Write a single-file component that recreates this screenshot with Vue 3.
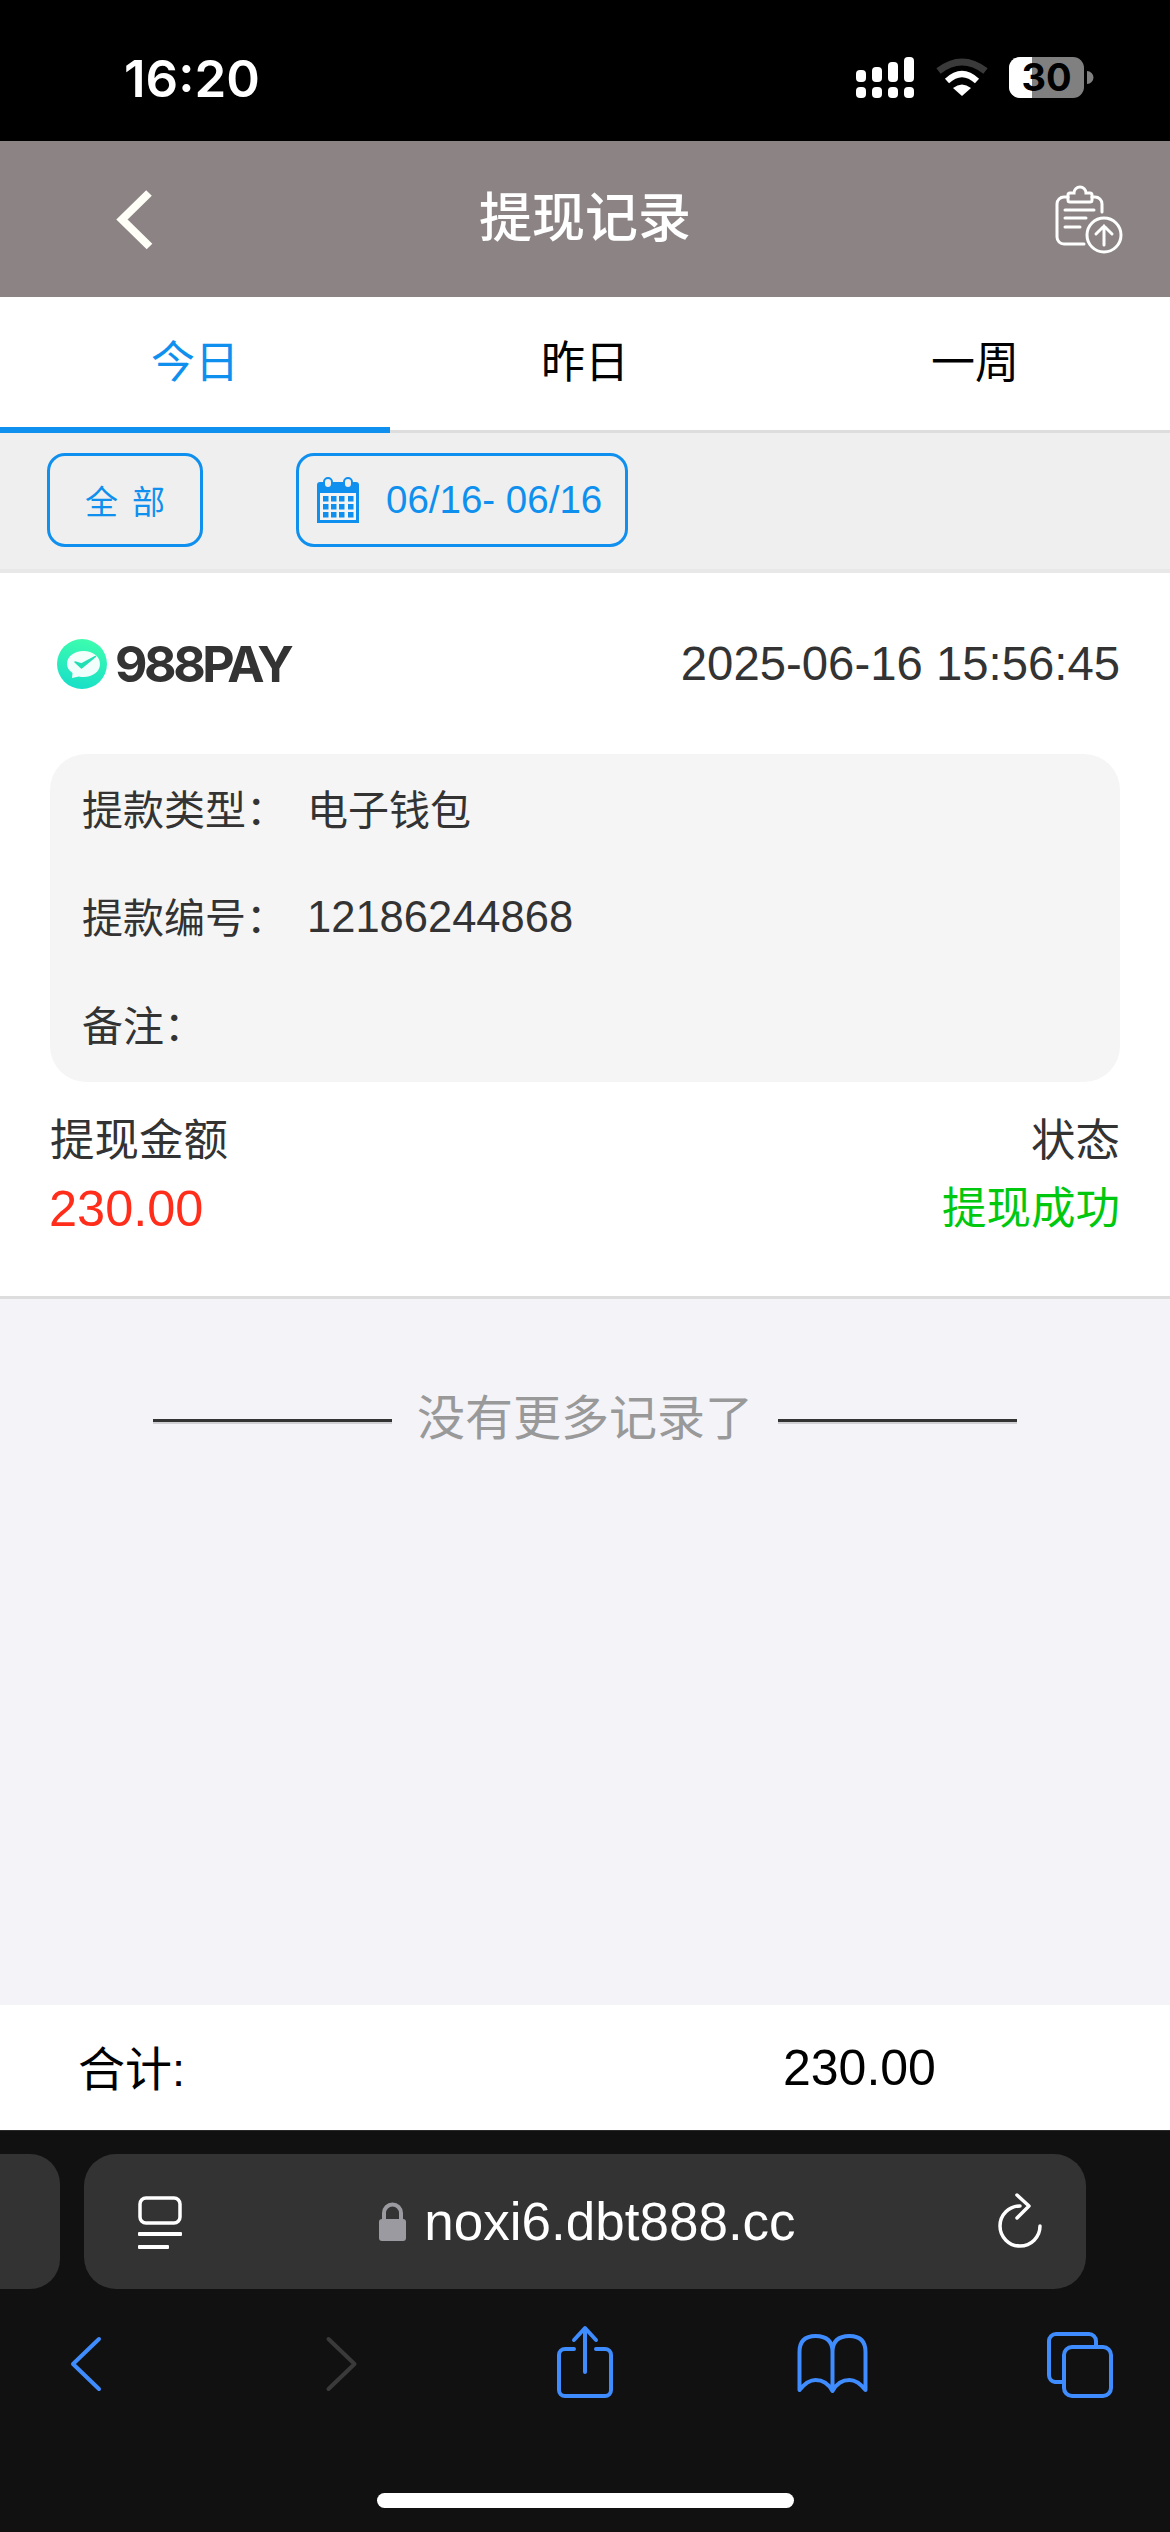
<template>
  <div class="page">
    <!-- status bar -->
    <div class="status">
      <span class="time">16:20</span>
      <svg class="status-icons" viewBox="850 50 245 55" width="245" height="55">
        <g fill="#fff">
          <rect x="856" y="70" width="10" height="12" rx="4" />
          <rect x="872" y="67" width="10" height="15" rx="4" />
          <rect x="888" y="62" width="10" height="20" rx="4" />
          <rect x="904" y="57" width="10" height="25" rx="4" />
          <rect x="856" y="87" width="10" height="11" rx="4" />
          <rect x="872" y="87" width="10" height="11" rx="4" />
          <rect x="888" y="87" width="10" height="11" rx="4" />
          <rect x="904" y="87" width="10" height="11" rx="4" />
        </g>
        <path d="M938.500 71 Q962 53 985.500 71" fill="none" stroke="#3a3a3a" stroke-width="7" />
        <path d="M947 81 Q962 67 977 81" fill="none" stroke="#fff" stroke-width="6" />
        <path d="M953 88 Q962 81 971 88 L962 96 Z" fill="#fff" />
        <rect x="1009" y="57" width="75" height="41" rx="11" fill="#808080" />
        <path d="M1032 57 H1020 a11 11 0 0 0 -11 11 V87 a11 11 0 0 0 11 11 H1032 Z" fill="#fff" />
        <path d="M1087 71 a6 6 0 0 1 0 13 Z" fill="#808080" />
        <text x="1046.500" y="91" class="batt-num" text-anchor="middle">30</text>
      </svg>
    </div>

    <!-- header -->
    <div class="header">
      <svg class="back" viewBox="110 180 50 76" width="50" height="76">
        <path d="M149 192 L122 218.500 L149.500 245.500" fill="none" stroke="#fffff8" stroke-width="8" />
      </svg>
      <span class="title">提现记录</span>
      <svg class="upload" viewBox="1050 180 76 76" width="76" height="76">
        <g fill="none" stroke="#fff" stroke-width="3" stroke-linecap="round">
          <path d="M1068 196 h-4 a7 7 0 0 0 -7 7 v33 a7 7 0 0 0 7 7 h20" />
          <path d="M1092 196 h3 a7 7 0 0 1 7 7 v8" />
          <path d="M1068 194 a2 2 0 0 1 2 -2 h4 a6 6 0 0 1 12 0 h4 a2 2 0 0 1 2 2 v5 a2 2 0 0 1 -2 2 h-20 a2 2 0 0 1 -2 -2 z" />
          <path d="M1065 209 h29 M1065 217 h21 M1065 226 h15" />
          <circle cx="1104" cy="234" r="17" />
          <path d="M1104 244 V225 M1096 233 L1104 225 L1112 233" />
        </g>
      </svg>
    </div>

    <!-- tabs -->
    <div class="tabs">
      <div v-for="(t, i) in tabs" :key="t" class="tab" :class="{ active: i === 0 }">{{ t }}</div>
    </div>

    <!-- filter -->
    <div class="filter">
      <div class="btn all">全 部</div>
      <div class="btn date">
        <svg viewBox="0 0 42 46" width="42" height="46">
          <path d="M3 5 H39 a3 3 0 0 1 3 3 V46 H0 V8 a3 3 0 0 1 3 -3 Z" fill="#1090ee" />
          <rect x="3" y="16" width="36" height="27" fill="#f4f4f4" />
          <rect x="7" y="1" width="8" height="10" rx="4" fill="#efefef" stroke="#1090ee" stroke-width="2" />
          <rect x="27" y="1" width="8" height="10" rx="4" fill="#efefef" stroke="#1090ee" stroke-width="2" />
          <g fill="#1090ee">
            <template v-for="y in [19, 27, 35]" :key="y">
              <rect v-for="x in [6, 14, 22, 31]" :key="x" :x="x" :y="y" width="5.500" height="5.500" />
            </template>
          </g>
        </svg>
        <span>06/16- 06/16</span>
      </div>
    </div>

    <!-- record -->
    <div class="card">
      <div class="card-head">
        <div class="brand">
          <svg viewBox="0 0 50 50" width="50" height="50">
            <defs>
              <linearGradient id="logo-g" x1="0.6" y1="0" x2="0.4" y2="1">
                <stop offset="0" stop-color="#3dfdae" />
                <stop offset="1" stop-color="#18dfc8" />
              </linearGradient>
            </defs>
            <circle cx="25" cy="25" r="25" fill="url(#logo-g)" />
            <path d="M26.500 12 C36 12 43 17.500 43 25 C43 32.500 36 38 26.500 38 C25 38 23.500 38 22 37.500 L15 39 L15.500 34 C12 31.500 10 28.500 10 25 C10 17.500 17 12 26.500 12 Z" fill="#fff" fill-opacity=".94" />
            <path d="M18 23 L24.500 29 L38.500 17.500 L24.500 25 Z" fill="#22dfb4" stroke="#22dfb4" stroke-width="1.500" stroke-linejoin="round" />
          </svg>
          <span>988PAY</span>
        </div>
        <span class="stamp">2025-06-16 15:56:45</span>
      </div>
      <div class="detail">
        <div v-for="r in details" :key="r.label" class="detail-row">
          <span class="detail-label">{{ r.label }}</span>
          <span :class="r.cls">{{ r.value }}</span>
        </div>
      </div>
      <div class="amounts">
        <div>
          <div class="cap">提现金额</div>
          <div class="money">230.00</div>
        </div>
        <div class="right">
          <div class="cap">状态</div>
          <div class="cap ok">提现成功</div>
        </div>
      </div>
    </div>

    <!-- list end -->
    <div class="empty">
      <div class="no-more">
        <i class="rule"></i>
        <span>没有更多记录了</span>
        <i class="rule"></i>
      </div>
    </div>

    <!-- total -->
    <div class="total">
      <span class="total-label">合计:</span>
      <span class="total-num">230.00</span>
    </div>

    <!-- safari bar -->
    <div class="browser">
      <div class="url-row">
        <div class="sliver"></div>
        <div class="url">
          <svg viewBox="138 2192 44 60" width="44" height="60">
            <rect x="140" y="2198" width="40" height="25" rx="6" fill="none" stroke="#fff" stroke-width="3.500" />
            <rect x="138" y="2232" width="44" height="4" rx="1" fill="#fff" />
            <rect x="138" y="2245" width="31" height="4" rx="1" fill="#fff" />
          </svg>
          <div class="host">
            <svg viewBox="378 2200 30 42" width="30" height="42">
              <rect x="380" y="2218" width="27" height="22" rx="3" fill="#9a9aa0" />
              <path d="M385 2219 v-7 a8.500 8.500 0 0 1 17 0 v7" fill="none" stroke="#9a9aa0" stroke-width="4" />
            </svg>
            <span>noxi6.dbt888.cc</span>
          </div>
          <svg viewBox="998 2190 44 60" width="44" height="60">
            <path d="M1020 2204 A20 20 0 1 0 1040 2224" fill="none" stroke="#fff" stroke-width="3.500" stroke-linecap="round" />
            <path d="M1017 2193 L1029 2204 L1017 2216" fill="none" stroke="#fff" stroke-width="3.500" stroke-linecap="round" stroke-linejoin="round" />
          </svg>
        </div>
      </div>
      <div class="tools">
        <svg viewBox="46 2322 80 80" width="80" height="80">
          <path d="M99 2339 L73 2364 L99 2389" class="tool" />
        </svg>
        <svg viewBox="295.500 2322 80 80" width="80" height="80">
          <path d="M328 2339 L354 2364 L328 2389" class="tool off" />
        </svg>
        <svg viewBox="545 2322 80 80" width="80" height="80">
          <path d="M574 2349 h-9 a6 6 0 0 0 -6 6 v35 a6 6 0 0 0 6 6 h40 a6 6 0 0 0 6 -6 v-35 a6 6 0 0 0 -6 -6 h-9" class="tool" />
          <path d="M585 2372 V2329 M574 2340 L585 2328 L596 2340" class="tool" />
        </svg>
        <svg viewBox="794.500 2322 80 80" width="80" height="80">
          <path d="M799 2390 V2352 Q799 2336 815 2336 Q832 2336 832 2352 Q832 2336 849 2336 Q865 2336 865 2352 V2390 Q857 2380 849 2380 Q838 2380 832 2391 Q826 2380 815 2380 Q807 2380 799 2390 Z M832 2352 V2391" class="tool" />
        </svg>
        <svg viewBox="1044 2322 80 80" width="80" height="80">
          <path d="M1096 2347 v-6 a7 7 0 0 0 -7 -7 h-33 a7 7 0 0 0 -7 7 v34 a7 7 0 0 0 6 7 h8" class="tool" />
          <rect x="1064" y="2347" width="47" height="49" rx="8" class="tool" />
        </svg>
      </div>
      <div class="home-bar"></div>
    </div>
  </div>
</template>

<script setup>
const tabs = ['今日', '昨日', '一周']

const details = [
  { label: '提款类型：', value: '电子钱包', cls: 'cjk-val' },
  { label: '提款编号：', value: '12186244868', cls: '' },
  { label: '备注：', value: '', cls: '' }
]
</script>

<style>
html,
body {
  margin: 0;
  background: #f3f3f8;
}
</style>

<style scoped>
.page {
  width: 1170px;
  height: 2532px;
  display: flex;
  flex-direction: column;
  overflow: hidden;
  font-family: "Liberation Sans", "Noto Sans CJK SC", sans-serif;
  color: #333;
  background: #f3f3f8;
}

.status {
  height: 141px;
  flex: none;
  background: #000;
  display: flex;
  align-items: flex-start;
  justify-content: space-between;
  padding: 50px 75px 0 124px;
  box-sizing: border-box;
}

.time {
  color: #fff;
  font-family: Inter, "Liberation Sans", sans-serif;
  font-size: 51px;
  font-weight: 600;
  line-height: 57px;
}

.batt-num {
  font-family: Inter, "Liberation Sans", sans-serif;
  font-size: 38px;
  font-weight: 700;
  fill: #000;
}

.header {
  height: 156px;
  flex: none;
  background: #8c8484;
  display: flex;
  align-items: center;
  justify-content: space-between;
  padding: 0 44px 0 110px;
  box-sizing: border-box;
}

.title {
  color: #fff;
  font-size: 53px;
  font-weight: 500;
  line-height: 70px;
  margin-right: 40px;
}

.tabs {
  height: 136px;
  flex: none;
  background: #fff;
  border-bottom: 3px solid #ddd;
  box-sizing: border-box;
  display: flex;
}

.tab {
  flex: 1;
  height: 136px;
  box-sizing: border-box;
  text-align: center;
  line-height: 132px;
  font-size: 44px;
  color: #000;
}

.tab.active {
  color: #1090ee;
  border-bottom: 6px solid #1090ee;
}

.filter {
  height: 140px;
  flex: none;
  background: #efefef;
  border-bottom: 4px solid #e8e8e8;
  box-sizing: border-box;
  padding: 20px 0 0 47px;
  display: flex;
  align-items: flex-start;
  gap: 93px;
}

.btn {
  height: 94px;
  box-sizing: border-box;
  border: 3px solid #1090ee;
  border-radius: 18px;
  color: #1090ee;
  display: flex;
  align-items: center;
}

.btn.all {
  width: 156px;
  justify-content: center;
  font-size: 33px;
  word-spacing: 5px;
}

.btn.date {
  width: 332px;
  padding-left: 18px;
  gap: 27px;
  font-size: 38.500px;
}

.card {
  flex: none;
  background: #fff;
  border-bottom: 3px solid #ddd;
  padding: 0 50px 53px;
}

.card-head {
  height: 181px;
  display: flex;
  align-items: center;
  justify-content: space-between;
}

.brand {
  display: flex;
  align-items: center;
  gap: 8px;
  margin-left: 7px;
  font-family: Inter, "Liberation Sans", sans-serif;
  font-size: 50px;
  font-weight: 700;
  letter-spacing: -3.400px;
}

.stamp {
  font-size: 47.300px;
}

.detail {
  background: #f5f5f5;
  border-radius: 36px;
  height: 328px;
  padding-top: 1px;
  box-sizing: border-box;
  font-size: 43.500px;
}

.detail-row {
  height: 108px;
  padding-left: 32px;
  display: flex;
  align-items: center;
}

.detail-label {
  width: 225px;
  font-size: 41px;
  padding-bottom: 4px;
}

.cjk-val {
  font-size: 41px;
  padding-bottom: 4px;
}

.amounts {
  margin-top: 25px;
  display: flex;
  justify-content: space-between;
}

.cap {
  font-size: 44.500px;
  line-height: 68px;
}

.money {
  font-size: 50.500px;
  line-height: 68px;
  color: #ff2d1a;
  margin-left: -1px;
}

.right {
  text-align: right;
}

.ok {
  color: #00c80f;
}

.empty {
  flex: 1;
  padding-top: 86px;
}

.no-more {
  display: flex;
  justify-content: center;
  align-items: center;
  gap: 25px;
  color: #999;
  font-size: 48px;
  line-height: 68px;
}

.rule {
  width: 239px;
  height: 3px;
  margin-top: 4px;
  background: #333;
  border-bottom: 2px solid #d0d0d4;
}

.total {
  height: 125px;
  flex: none;
  background: #fff;
  padding-left: 78px;
  display: flex;
  align-items: center;
  color: #000;
  font-size: 50px;
}

.total-label {
  width: 705px;
  font-size: 47px;
  padding-bottom: 4px;
}

.browser {
  height: 402px;
  flex: none;
  background: #111;
  border-top: 1px solid #2a2a2a;
  box-sizing: border-box;
  padding-top: 23px;
}

.url-row {
  display: flex;
  gap: 24px;
}

.sliver {
  width: 60px;
  height: 135px;
  background: #333;
  border-radius: 0 30px 30px 0;
}

.url {
  width: 1002px;
  height: 135px;
  background: #333;
  border-radius: 32px;
  box-sizing: border-box;
  padding: 0 44px 0 54px;
  display: flex;
  align-items: center;
}

.host {
  flex: 1;
  display: flex;
  align-items: center;
  justify-content: center;
  gap: 17px;
  padding-right: 7px;
  color: #fff;
  font-size: 53px;
}

.tools {
  margin-top: 33px;
  padding: 0 46px;
  display: flex;
  justify-content: space-between;
}

.tool {
  fill: none;
  stroke: #3f8cff;
  stroke-width: 4;
  stroke-linecap: round;
  stroke-linejoin: round;
}

.tool.off {
  stroke: #3a3a3a;
}

.home-bar {
  width: 417px;
  height: 15px;
  margin: 91px auto 0;
  background: #fff;
  border-radius: 8px;
}
</style>
